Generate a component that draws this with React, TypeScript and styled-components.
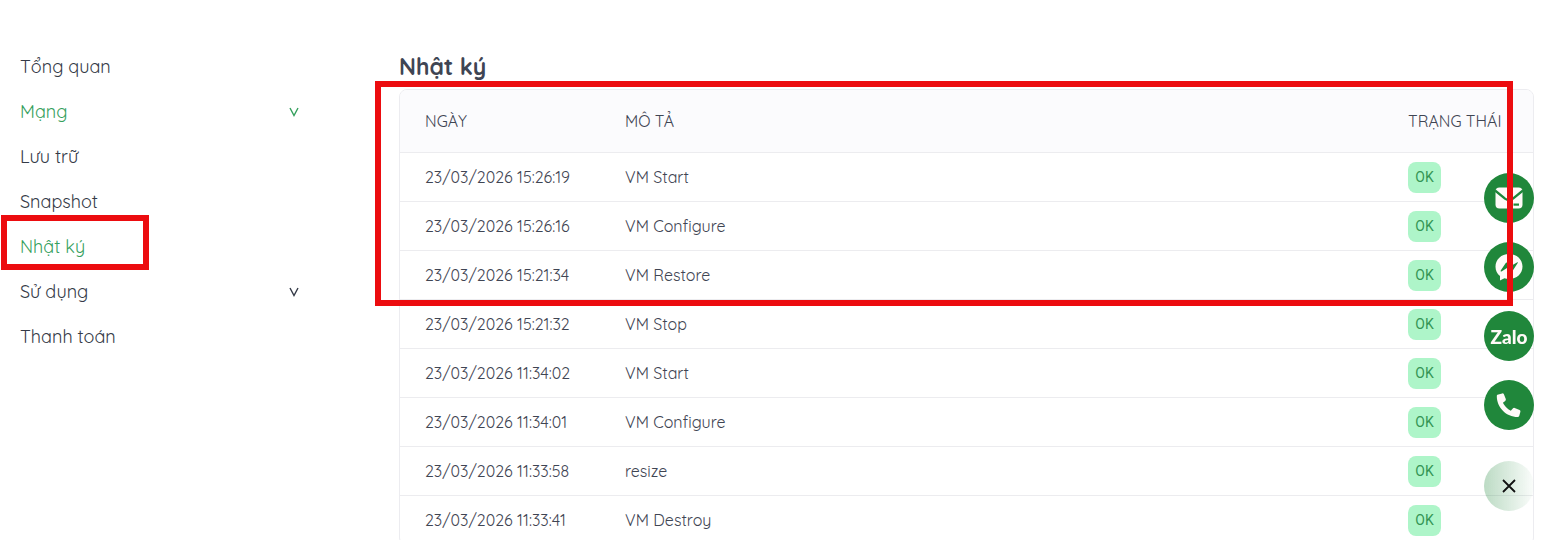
import React from 'react';
import styled, { createGlobalStyle, css } from 'styled-components';

const GlobalStyle = createGlobalStyle`
  *, *::before, *::after { box-sizing: border-box; }
  body {
    margin: 0;
    background: #fff;
    color: #3f4553;
    font-family: Quicksand, Lato, "Noto Sans", sans-serif;
    font-size: 16px;
  }
`;

const Page = styled.div`
  display: grid;
  grid-template-columns: 399px minmax(0, 1fr);
  height: 100vh;
  overflow: hidden;
  padding: 44px 19px 0 0;
`;

const Sidebar = styled.nav`
  padding: 0 98px 0 0;
`;

const MenuList = styled.ul`
  list-style: none;
  margin: 0;
  padding: 0;
`;

const MenuItem = styled.li`
  position: relative;
`;

const entryStyle = css<{ $active?: boolean }>`
  display: flex;
  align-items: center;
  justify-content: space-between;
  width: 100%;
  height: 45px;
  padding: 0 2px 0 20px;
  border: 0;
  background: none;
  font: inherit;
  font-size: 18px;
  line-height: 24px;
  text-align: left;
  text-decoration: none;
  cursor: pointer;
  color: ${(p) => (p.$active ? '#35a05d' : '#343a47')};
`;

const MenuLink = styled.a<{ $active?: boolean }>`
  ${entryStyle}
`;

const MenuToggle = styled.button<{ $active?: boolean }>`
  ${entryStyle}
`;

const Highlight = styled.div`
  position: absolute;
  z-index: 3;
  border: 6px solid #ec0c0f;
  pointer-events: none;
`;

const MenuHighlight = styled(Highlight)`
  top: -9px;
  left: 1px;
  width: 148px;
  height: 55px;
`;

const TableHighlight = styled(Highlight)`
  top: -9px;
  left: -25px;
  right: 20px;
  height: 225px;
`;

const Title = styled.h1`
  margin: 0;
  height: 45px;
  font-size: 23px;
  line-height: 45px;
  font-weight: 700;
`;

const TableFrame = styled.div`
  position: relative;
  border: 1px solid #ececf0;
  border-radius: 8px;
`;

const LogTable = styled.table`
  width: 100%;
  table-layout: fixed;
  border-collapse: separate;
  border-spacing: 0;
`;

const HeadCell = styled.th<{ $width?: number }>`
  width: ${(p) => (p.$width ? `${p.$width}px` : 'auto')};
  height: 63px;
  padding: 0 25px;
  background: #fbfbfd;
  border-bottom: 1px solid #ececef;
  font-weight: 400;
  text-align: left;
  white-space: nowrap;

  &:first-child { border-top-left-radius: 7px; }
  &:last-child { border-top-right-radius: 7px; }
`;

const Cell = styled.td`
  height: 49px;
  padding: 0 25px;
  border-bottom: 1px solid #ececef;
  white-space: nowrap;
`;

const Badge = styled.span`
  display: flex;
  align-items: center;
  justify-content: center;
  width: 33px;
  height: 31px;
  border-radius: 8px;
  background: #aef5c9;
  color: #359555;
  font-family: Roboto, sans-serif;
  font-size: 14px;
`;

const ContactBar = styled.aside`
  position: fixed;
  z-index: 2;
  right: 19px;
  bottom: 29px;
  display: flex;
  flex-direction: column;
  gap: 19px;
`;

const round = css`
  display: flex;
  align-items: center;
  justify-content: center;
  width: 50px;
  height: 50px;
  border: 0;
  border-radius: 50%;
  padding: 0;
`;

const ContactLink = styled.a`
  ${round}
  background: #20873b;
  color: #fffaf8;
  font-family: Lato, sans-serif;
  font-size: 19px;
  font-weight: 900;
  text-decoration: none;
`;

const CloseButton = styled.button`
  ${round}
  margin-top: 12px;
  background: linear-gradient(90deg, rgba(32, 135, 59, 0.3), rgba(32, 135, 59, 0.02));
  cursor: pointer;
`;

const Chevron = () => (
  <svg width="10" height="10" viewBox="0 0 10 10" fill="none" stroke="currentColor" strokeWidth="1.4" aria-hidden="true">
    <path d="M1 1 L5 8.5 L9 1" />
  </svg>
);

const MailIcon = () => (
  <svg width="28" height="22" viewBox="0 0 28 22" aria-hidden="true">
    <rect x="0.5" y="0.5" width="27" height="21" rx="4" fill="#fffaf8" />
    <path d="M0 3.5 L10 11.6 Q14 14.6 18 11.6 L28 3.5" fill="none" stroke="#20873b" strokeWidth="2.4" />
    <rect x="18.5" y="16.5" width="5.5" height="2.2" fill="#20873b" />
  </svg>
);

const MessengerIcon = () => (
  <svg width="28" height="28" viewBox="0 0 28 28" aria-hidden="true">
    <path d="M14 1 C6.3 1 0.5 6.5 0.5 13.7 C0.5 17.5 2.2 20.7 5 23 V27.5 L9.4 25.3 C10.9 25.8 12.4 26 14 26 C21.7 26 27.5 20.7 27.5 13.5 C27.5 6.3 21.7 1 14 1 Z" fill="#fffaf8" />
    <path d="M5.7 17.6 L10.4 10.4 Q11.5 9 13 10.1 L16.2 12.8 L22.4 9.2 Q23.3 9 22.7 10 L18 17.2 Q17 18.7 15.4 17.5 L12 15 L6.5 18.4 Q5.2 18.7 5.7 17.6 Z" fill="#20873b" />
  </svg>
);

const PhoneIcon = () => (
  <svg width="26" height="26" viewBox="0 0 26 26" aria-hidden="true">
    <path d="M1.4 2.7 L6.2 1.4 Q7.4 1.2 7.9 2.3 L9.8 7 Q10.1 8.1 9.2 8.9 L6.9 10.8 Q9.5 16 14.8 18.8 L16.8 16.4 Q17.6 15.5 18.7 15.9 L23.6 18 Q24.7 18.6 24.4 19.8 L23.2 24 Q22.8 25 21.7 25 C10.2 25 0.8 15.5 0.8 4 Q0.8 3 1.4 2.7 Z" fill="#fffaf8" />
  </svg>
);

const CloseIcon = () => (
  <svg width="14" height="14" viewBox="0 0 14 14" aria-hidden="true">
    <path d="M1 1 L13 13 M13 1 L1 13" stroke="#111" strokeWidth="1.8" />
  </svg>
);

interface MenuEntry {
  label: string;
  active?: boolean;
  expandable?: boolean;
  marked?: boolean;
}

const menu: MenuEntry[] = [
  { label: 'Tổng quan' },
  { label: 'Mạng', active: true, expandable: true },
  { label: 'Lưu trữ' },
  { label: 'Snapshot' },
  { label: 'Nhật ký', active: true, marked: true },
  { label: 'Sử dụng', expandable: true },
  { label: 'Thanh toán' },
];

const logs = [
  ['23/03/2026 15:26:19', 'VM Start'],
  ['23/03/2026 15:26:16', 'VM Configure'],
  ['23/03/2026 15:21:34', 'VM Restore'],
  ['23/03/2026 15:21:32', 'VM Stop'],
  ['23/03/2026 11:34:02', 'VM Start'],
  ['23/03/2026 11:34:01', 'VM Configure'],
  ['23/03/2026 11:33:58', 'resize'],
  ['23/03/2026 11:33:41', 'VM Destroy'],
];

export default function App() {
  return (
    <>
      <GlobalStyle />
      <Page>
        <Sidebar>
          <MenuList>
            {menu.map((item) => (
              <MenuItem key={item.label}>
                {item.expandable ? (
                  <MenuToggle type="button" $active={item.active}>
                    {item.label}
                    <Chevron />
                  </MenuToggle>
                ) : (
                  <MenuLink href="#" $active={item.active}>
                    {item.label}
                  </MenuLink>
                )}
                {item.marked && <MenuHighlight />}
              </MenuItem>
            ))}
          </MenuList>
        </Sidebar>
        <main>
          <Title>Nhật ký</Title>
          <TableFrame>
            <LogTable>
              <thead>
                <tr>
                  <HeadCell $width={200}>NGÀY</HeadCell>
                  <HeadCell>MÔ TẢ</HeadCell>
                  <HeadCell $width={150}>TRẠNG THÁI</HeadCell>
                </tr>
              </thead>
              <tbody>
                {logs.map(([date, text]) => (
                  <tr key={date}>
                    <Cell>{date}</Cell>
                    <Cell>{text}</Cell>
                    <Cell>
                      <Badge>OK</Badge>
                    </Cell>
                  </tr>
                ))}
              </tbody>
            </LogTable>
            <TableHighlight />
          </TableFrame>
        </main>
        <ContactBar>
          <ContactLink href="#" aria-label="Email"><MailIcon /></ContactLink>
          <ContactLink href="#" aria-label="Messenger"><MessengerIcon /></ContactLink>
          <ContactLink href="#">Zalo</ContactLink>
          <ContactLink href="#" aria-label="Phone"><PhoneIcon /></ContactLink>
          <CloseButton type="button" aria-label="Close"><CloseIcon /></CloseButton>
        </ContactBar>
      </Page>
    </>
  );
}
